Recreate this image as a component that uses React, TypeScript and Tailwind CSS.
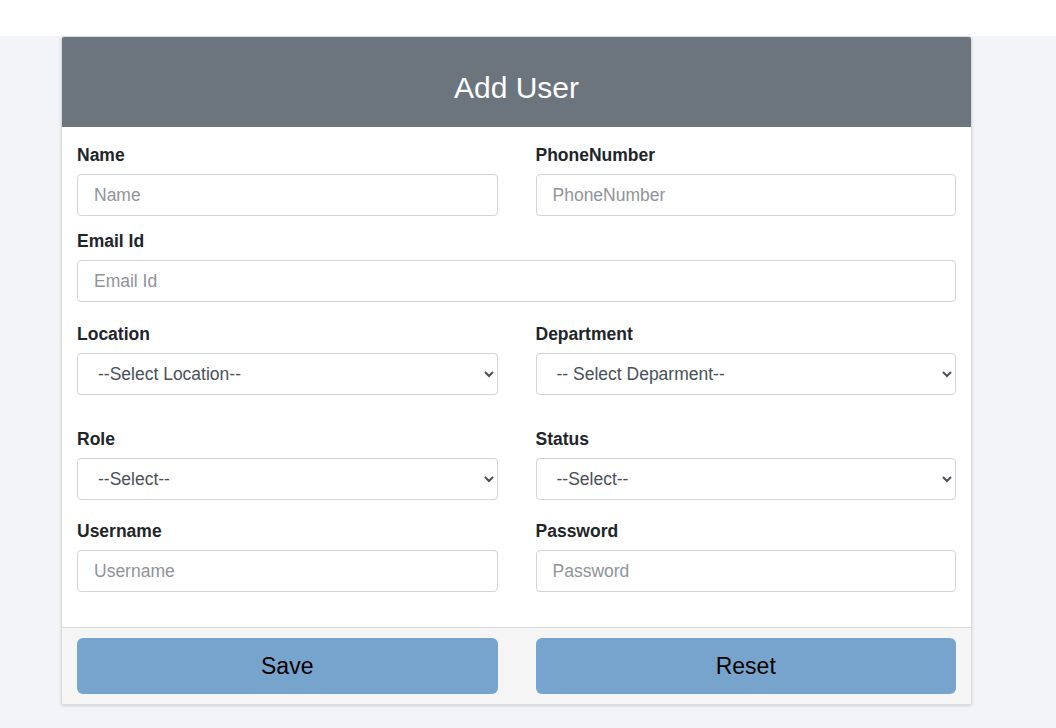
import React from 'react';

const font = { fontFamily: '"Liberation Sans", Arial, sans-serif' };

function Label({ children }: { children: React.ReactNode }) {
  return <label className="block mb-[7px] text-[17.5px] leading-6 font-bold text-[#212529]">{children}</label>;
}

function TextInput({ placeholder, type = 'text' }: { placeholder: string; type?: string }) {
  return (
    <input
      type={type}
      placeholder={placeholder}
      className="block w-full h-[42px] px-4 text-[17.5px] text-[#495057] bg-white border border-[#ced4da] rounded-[4px] placeholder:text-[#8f949a] outline-none"
    />
  );
}

function Select({ options }: { options: string[] }) {
  return (
    <select className="block w-full h-[42px] pl-4 pr-2 text-[17.5px] text-[#495057] bg-white border border-[#ced4da] rounded-[4px] outline-none">
      {options.map((o) => (
        <option key={o}>{o}</option>
      ))}
    </select>
  );
}

export default function App() {
  return (
    <div className="min-h-[728px] bg-white" style={font}>
      <div className="h-9 bg-white" />
      <div className="bg-[#f3f4f8] min-h-[692px] pl-[61px] pr-[84px]">
        <div className="w-[911px] bg-white border border-[#dcdcdc] rounded-[3px] shadow-[0_1px_3px_rgba(0,0,0,0.15)] overflow-hidden">
          {/* Header */}
          <div className="h-[90px] bg-[#6c757d] flex items-center justify-center">
            <h1 className="mt-[10px] text-[30px] text-white font-normal">Add User</h1>
          </div>

          {/* Body */}
          <div className="pl-[15px] pr-[15px] pt-[16px] pb-[35px]">
            <div className="grid grid-cols-2 gap-x-[38px]">
              <div>
                <Label>Name</Label>
                <TextInput placeholder="Name" />
              </div>
              <div>
                <Label>PhoneNumber</Label>
                <TextInput placeholder="PhoneNumber" />
              </div>
            </div>

            <div className="mt-[13px]">
              <Label>Email Id</Label>
              <TextInput placeholder="Email Id" type="email" />
            </div>

            <div className="grid grid-cols-2 gap-x-[38px] mt-[20px]">
              <div>
                <Label>Location</Label>
                <Select options={['--Select Location--']} />
              </div>
              <div>
                <Label>Department</Label>
                <Select options={['-- Select Deparment--']} />
              </div>
            </div>

            <div className="grid grid-cols-2 gap-x-[38px] mt-[32px]">
              <div>
                <Label>Role</Label>
                <Select options={['--Select--']} />
              </div>
              <div>
                <Label>Status</Label>
                <Select options={['--Select--']} />
              </div>
            </div>

            <div className="grid grid-cols-2 gap-x-[38px] mt-[19px]">
              <div>
                <Label>Username</Label>
                <TextInput placeholder="Username" />
              </div>
              <div>
                <Label>Password</Label>
                <TextInput placeholder="Password" type="password" />
              </div>
            </div>
          </div>

          {/* Footer */}
          <div className="bg-[#f5f5f5] border-t border-[#d9d9d9] px-[15px] pt-[10px] pb-[10px] grid grid-cols-2 gap-x-[38px]">
            <button className="h-14 bg-[#77a4cd] rounded-[6px] text-[23px] text-black">Save</button>
            <button className="h-14 bg-[#77a4cd] rounded-[6px] text-[23px] text-black">Reset</button>
          </div>
        </div>
      </div>
    </div>
  );
}
